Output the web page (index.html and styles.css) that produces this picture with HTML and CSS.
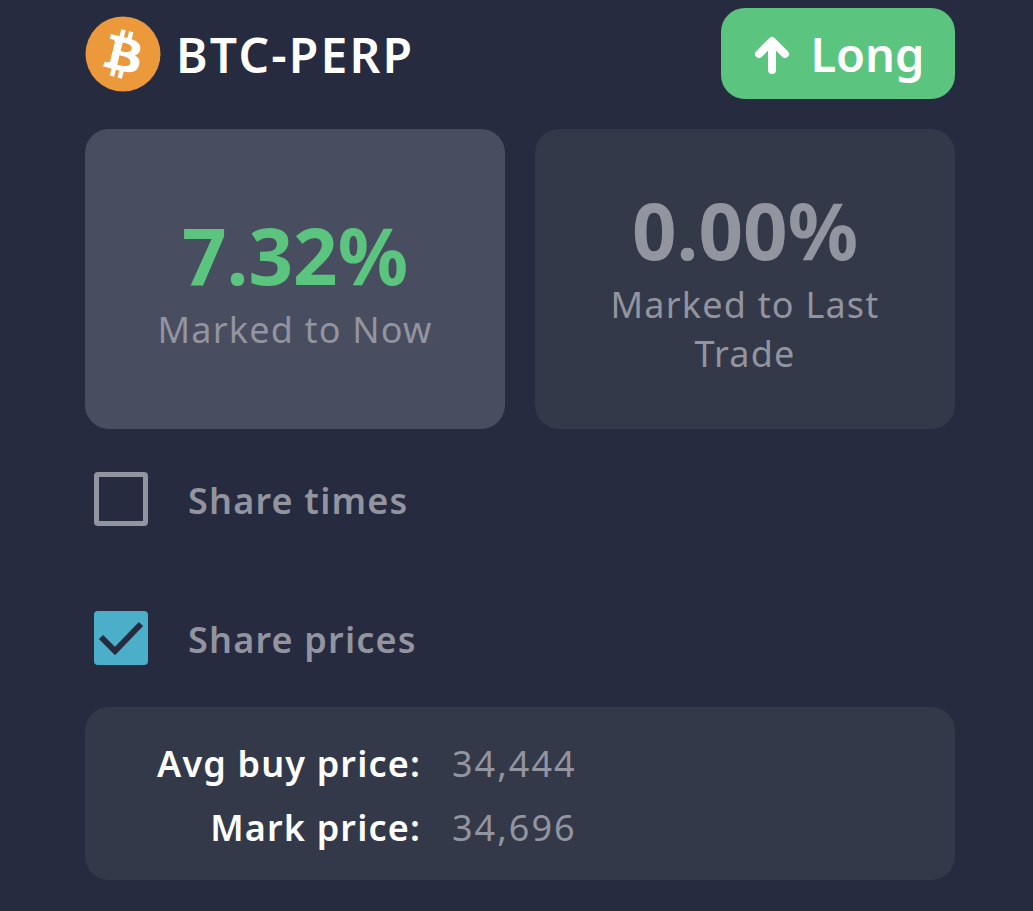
FILE: index.html
```html
<!DOCTYPE html>
<html lang="en">
<head>
    <meta charset="UTF-8">
    <meta name="viewport" content="width=device-width, initial-scale=1.0">
    <title>BTC-PERP</title>
    <link rel="stylesheet" href="styles.css">
</head>
<body>
    <div class="container">
        <!-- Header -->
        <div class="header">
            <div class="market">
                <svg class="coin" viewBox="0 0 76 76">
                    <circle cx="38" cy="38" r="37.5" fill="#ec993c"/>
                    <path fill="#fff" fill-rule="evenodd" d="M55.2 33.2c.8-5.200-3.200-8-8.600-9.900l1.800-7-4.300-1.100-1.700 6.800c-1.100-.3-2.300-.6-3.500-.8l1.700-6.900-4.300-1.100-1.800 7c-.9-.2-1.800-.4-2.700-.6l-5.900-1.500-1.100 4.600s3.200.7 3.100.8c1.700.4 2 1.600 2 2.500l-2 8-2.800 11.200c-.2.500-.8 1.300-2 1 0 .1-3.100-.8-3.100-.8l-2.100 4.900 5.600 1.400c1 .3 2.100.5 3.100.8l-1.800 7.100 4.300 1.100 1.800-7c1.200.3 2.300.6 3.400.9l-1.700 7 4.300 1.100 1.800-7.100c7.300 1.400 12.800.8 15.100-5.800 1.900-5.300-.1-8.400-3.900-10.400 2.800-.6 4.900-2.500 5.500-6.300zM45.400 47c-1.400 5.300-10.300 2.400-13.200 1.700l2.300-9.400c2.900.7 12.200 2.200 10.900 7.700zm1.300-13.900c-1.200 4.900-8.700 2.400-11.100 1.800l2.100-8.500c2.400.6 10.300 1.700 9 6.700z"/>
                </svg>
                <span class="market-name">BTC-PERP</span>
            </div>
            <div class="side">
                <svg class="arrow" viewBox="0 0 38 40">
                    <path d="M19 36V8M6 20L19 7l13 13" fill="none" stroke="#fff" stroke-width="8" stroke-linecap="round" stroke-linejoin="round"/>
                </svg>
                <span>Long</span>
            </div>
        </div>

        <!-- PnL cards -->
        <div class="cards">
            <div class="card card-active">
                <div class="pct pct-green">7.32%</div>
                <div class="card-label">Marked to Now</div>
            </div>
            <div class="card">
                <div class="pct">0.00%</div>
                <div class="card-label">Marked to Last Trade</div>
            </div>
        </div>

        <!-- Options -->
        <div class="option">
            <span class="check"></span>
            <span class="option-label">Share times</span>
        </div>
        <div class="option option-last">
            <span class="check check-on">
                <svg viewBox="0 0 54 54">
                    <path d="M7 26l14 14L47 13" fill="none" stroke="#262b40" stroke-width="6"/>
                </svg>
            </span>
            <span class="option-label">Share prices</span>
        </div>

        <!-- Prices -->
        <div class="prices">
            <div class="price-row">
                <span class="price-key">Avg buy price:</span>
                <span class="price-val">34,444</span>
            </div>
            <div class="price-row">
                <span class="price-key">Mark price:</span>
                <span class="price-val">34,696</span>
            </div>
        </div>
    </div>
</body>
</html>
```

FILE: styles.css
```css
/* General Styles */
body {
    font-family: "Noto Sans", sans-serif;
    background-color: #262b40;
    margin: 0;
    padding: 0;
    color: #fff;
}

.container {
    width: 870px;
    margin: 0 0 0 85px;
    padding: 8px 0 0;
}

/* Header */
.header {
    display: flex;
    justify-content: space-between;
    align-items: flex-start;
    height: 121px;
}

.market {
    display: flex;
    align-items: center;
    gap: 15px;
    padding-top: 8px;
}

.coin {
    width: 76px;
    height: 76px;
}

.market-name {
    font-size: 48px;
    font-weight: 600;
    letter-spacing: 2.2px;
}

.side {
    display: flex;
    align-items: center;
    justify-content: center;
    gap: 19px;
    width: 234px;
    height: 91px;
    box-sizing: border-box;
    padding-left: 2px;
    background-color: #5bc580;
    border-radius: 24px;
    font-size: 47px;
    font-weight: 600;
}

.arrow {
    width: 38px;
    height: 40px;
}

/* Cards */
.cards {
    display: grid;
    grid-template-columns: 420px 420px;
    gap: 30px;
}

.card {
    height: 300px;
    border-radius: 24px;
    background-color: #343949;
    display: flex;
    flex-direction: column;
    justify-content: center;
    align-items: center;
    padding: 8px 40px 0;
    box-sizing: border-box;
    text-align: center;
}

.card-active {
    background-color: #484d5f;
}

.pct {
    font-size: 78px;
    font-weight: 700;
    line-height: 84px;
    margin-bottom: 8px;
    color: #92949f;
}

.pct-green {
    color: #5bc580;
}

.card-label {
    font-size: 36px;
    line-height: 49px;
    letter-spacing: 1.2px;
    color: #92949f;
}

/* Options */
.option {
    display: flex;
    align-items: center;
    gap: 40px;
    margin-top: 43px;
    padding-left: 9px;
    height: 54px;
}

.option-last {
    margin-top: 85px;
}

.check {
    width: 54px;
    height: 54px;
    box-sizing: border-box;
    border: 5px solid #92949f;
    border-radius: 4px;
}

.check-on {
    border: none;
    background-color: #4cafc9;
}

.check-on svg {
    display: block;
}

.option-label {
    padding-top: 2px;
    font-size: 36px;
    font-weight: 600;
    letter-spacing: 1.2px;
    color: #92949f;
}

/* Prices */
.prices {
    margin-top: 42px;
    height: 173px;
    box-sizing: border-box;
    padding-top: 25px;
    background-color: #343949;
    border-radius: 24px;
}

.price-row {
    display: grid;
    grid-template-columns: 336px 1fr;
    column-gap: 31px;
    font-size: 36px;
    line-height: 64px;
}

.price-key {
    font-weight: 600;
    letter-spacing: 1.15px;
    text-align: right;
}

.price-val {
    letter-spacing: 2px;
    color: #92949f;
}
```
